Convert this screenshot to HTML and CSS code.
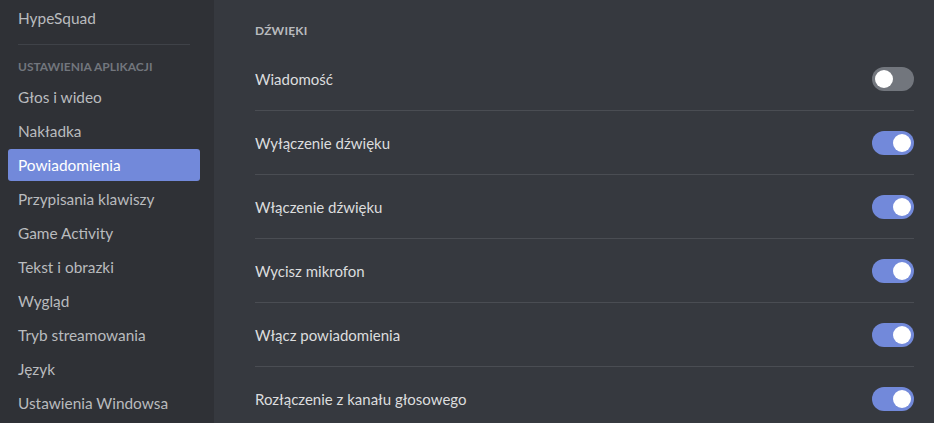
FILE: index.html
```html
<!DOCTYPE html>
<html lang="pl">
<head>
  <meta charset="UTF-8" />
  <title>Ustawienia</title>
  <link rel="stylesheet" href="styles.css">
</head>
<body>
  <div class="app">
    <!-- Left settings menu -->
    <nav class="sidebar">
      <div class="item">HypeSquad</div>
      <div class="separator"></div>
      <div class="group-header">Ustawienia aplikacji</div>
      <div class="item">Głos i wideo</div>
      <div class="item">Nakładka</div>
      <div class="item selected">Powiadomienia</div>
      <div class="item">Przypisania klawiszy</div>
      <div class="item">Game Activity</div>
      <div class="item">Tekst i obrazki</div>
      <div class="item">Wygląd</div>
      <div class="item">Tryb streamowania</div>
      <div class="item">Język</div>
      <div class="item">Ustawienia Windowsa</div>
    </nav>

    <!-- Sound toggles -->
    <main class="content">
      <h5 class="section-title">Dźwięki</h5>
      <div class="row">
        <span class="label">Wiadomość</span>
        <span class="switch"></span>
      </div>
      <div class="row">
        <span class="label">Wyłączenie dźwięku</span>
        <span class="switch on"></span>
      </div>
      <div class="row">
        <span class="label">Włączenie dźwięku</span>
        <span class="switch on"></span>
      </div>
      <div class="row">
        <span class="label">Wycisz mikrofon</span>
        <span class="switch on"></span>
      </div>
      <div class="row">
        <span class="label">Włącz powiadomienia</span>
        <span class="switch on"></span>
      </div>
      <div class="row">
        <span class="label">Rozłączenie z kanału głosowego</span>
        <span class="switch on"></span>
      </div>
    </main>
  </div>
</body>
</html>
```

FILE: styles.css
```css
* { box-sizing: border-box; }

body {
  margin: 0;
  height: 423px;
  overflow: hidden;
  font-family: 'Lato', 'Noto Sans', sans-serif;
  background: #36393f;
}

.app {
  display: flex;
  height: 100%;
}

/* Sidebar */
.sidebar {
  width: 214px;
  flex-shrink: 0;
  background: #2f3136;
  padding: 2px 14px 0 8px;
  display: flex;
  flex-direction: column;
}

.item {
  height: 32px;
  line-height: 32px;
  margin-bottom: 2px;
  padding-left: 10px;
  border-radius: 3px;
  font-size: 15.4px;
  color: #b9bbbe;
  white-space: nowrap;
}

.item.selected {
  background: #7289da;
  color: #fff;
}

.separator {
  height: 1px;
  margin: 8px 10px;
  background: #3f4248;
}

.group-header {
  padding: 6px 10px;
  line-height: 16px;
  font-size: 12px;
  font-weight: bold;
  text-transform: uppercase;
  color: #72767d;
}

/* Content */
.content {
  flex: 1;
  padding: 23px 20px 0 41px;
}

.section-title {
  margin: 0 0 8px;
  line-height: 16px;
  font-size: 12px;
  font-weight: bold;
  text-transform: uppercase;
  letter-spacing: 0.2px;
  color: #b9bbbe;
}

.row {
  display: flex;
  align-items: center;
  justify-content: space-between;
  height: 64px;
  border-bottom: 1px solid #4a4d53;
}

.label {
  font-size: 15px;
  color: #dcddde;
}

.switch {
  position: relative;
  width: 42px;
  height: 24px;
  border-radius: 12px;
  background: #72767d;
}

.switch::after {
  content: "";
  position: absolute;
  top: 3px;
  left: 3px;
  width: 18px;
  height: 18px;
  border-radius: 50%;
  background: #fff;
}

.switch.on {
  background: #7289da;
}

.switch.on::after {
  left: 21px;
}
```
